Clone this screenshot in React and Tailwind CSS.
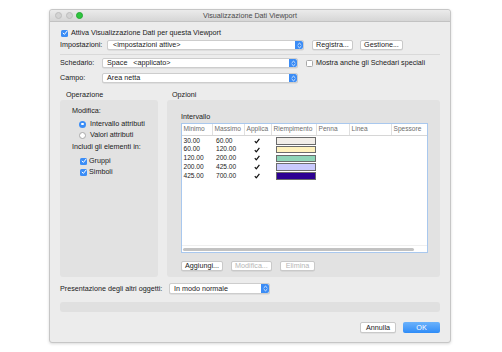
import React from "react";

function Check({ checked }) {
  return checked ? (
    <div className="w-[7px] h-[7px] rounded-[1.5px] bg-[#3b8df6] flex items-center justify-center shrink-0">
      <svg width="6" height="6" viewBox="0 0 6 6">
        <path d="M1.1 3.1 L2.4 4.4 L4.9 1.3" stroke="white" strokeWidth="1" fill="none" strokeLinecap="round" strokeLinejoin="round" />
      </svg>
    </div>
  ) : (
    <div className="w-[7px] h-[7px] rounded-[1.5px] bg-white border border-[#a8a8a8] shrink-0" />
  );
}

function Radio({ on }) {
  return on ? (
    <div className="w-[7px] h-[7px] rounded-full bg-[#3b8df6] flex items-center justify-center shrink-0">
      <div className="w-[2.5px] h-[2.5px] rounded-full bg-white" />
    </div>
  ) : (
    <div className="w-[7px] h-[7px] rounded-full bg-white border border-[#a8a8a8] shrink-0" />
  );
}

function Stepper() {
  return (
    <div className="w-[8px] h-full bg-[#3b8cf5] rounded-r-[2px] flex items-center justify-center shrink-0">
      <svg width="5" height="7" viewBox="0 0 5 7">
        <path d="M1 2.6 L2.5 1.2 L4 2.6 M1 4.4 L2.5 5.8 L4 4.4" stroke="white" strokeWidth="0.8" fill="none" strokeLinecap="round" strokeLinejoin="round" />
      </svg>
    </div>
  );
}

function Select({ w, text, pl }) {
  return (
    <div className={`${w} h-full bg-white rounded-[2px] border border-[#cdcdcd] shadow-[0_0.5px_0.5px_rgba(0,0,0,0.12)] flex items-stretch`}>
      <div className={`flex-1 flex items-center ${pl} whitespace-pre text-[#1a1a1a]`}>{text}</div>
      <Stepper />
    </div>
  );
}

function Btn({ w, children, disabled }) {
  return (
    <div
      className={`${w} h-full bg-white rounded-[2px] border border-[#c9c9c9] shadow-[0_0.5px_0.5px_rgba(0,0,0,0.1)] flex items-center justify-center ${
        disabled ? "text-[#b5b5b5] bg-[#f4f4f4]" : "text-[#1a1a1a]"
      }`}
    >
      {children}
    </div>
  );
}

const rows = [
  ["30.00", "60.00", "#f2eee9"],
  ["60.00", "120.00", "#fff2bd"],
  ["120.00", "200.00", "#8ed5b8"],
  ["200.00", "425.00", "#c9c9fd"],
  ["425.00", "700.00", "#2c0092"],
];

const heads = ["Minimo", "Massimo", "Applica", "Riempimento", "Penna", "Linea", "Spessore"];

export default function App() {
  return (
    <div className="w-[502px] h-[352px] bg-white pt-[9px] pl-[49px] font-['Liberation_Sans',Arial,sans-serif] text-[7.2px] leading-none text-[#1a1a1a]">
      <div className="w-[402px] h-[334px] bg-[#ececec] border border-[#c6c6c6] rounded-[3px] shadow-[0_1px_3px_rgba(0,0,0,0.15)] flex flex-col">
        {/* title bar */}
        <div className="h-[12px] bg-gradient-to-b from-[#ebebeb] to-[#d6d6d6] border-b border-[#c2c2c2] rounded-t-[3px] grid grid-cols-[1fr_auto_1fr] items-center">
          <div className="flex items-center gap-[3.5px] pl-[5px]">
            <div className="w-[7px] h-[7px] rounded-full bg-[#d3d3d3] border border-[#bdbdbd]" />
            <div className="w-[7px] h-[7px] rounded-full bg-[#d3d3d3] border border-[#bdbdbd]" />
            <div className="w-[7px] h-[7px] rounded-full bg-[#2fc63f] border border-[#25a833]" />
          </div>
          <div className="text-[#4a4a4a]">Visualizzazione Dati Viewport</div>
          <div />
        </div>

        <div className="px-[10px] flex flex-col">
          {/* Attiva */}
          <div className="mt-[7px] h-[8px] flex items-center">
            <div className="ml-[1px]"><Check checked /></div>
            <span className="ml-[3px]">Attiva Visualizzazione Dati per questa Viewport</span>
          </div>

          {/* Impostazioni */}
          <div className="mt-[3px] h-[10px] flex items-center">
            <div className="w-[47px]">Impostazioni:</div>
            <Select w="w-[197px]" text="<impostazioni attive>" pl="pl-[5px]" />
            <div className="ml-[8px] h-full"><Btn w="w-[41px]">Registra...</Btn></div>
            <div className="ml-[7px] h-full"><Btn w="w-[43px]">Gestione...</Btn></div>
          </div>

          <div className="mt-[4px] h-px bg-[#d9d9d9]" />

          {/* Schedario */}
          <div className="mt-[3px] h-[10px] flex items-center">
            <div className="w-[42px]">Schedario:</div>
            <Select w="w-[196px]" text="Space   <applicato>" pl="pl-[4px]" />
            <div className="ml-[8px]"><Check /></div>
            <span className="ml-[3px]">Mostra anche gli Schedari speciali</span>
          </div>

          {/* Campo */}
          <div className="mt-[5px] h-[10px] flex items-center">
            <div className="w-[42px]">Campo:</div>
            <Select w="w-[196px]" text="Area netta" pl="pl-[4px]" />
          </div>

          {/* group labels */}
          <div className="mt-[8px] h-[8px] flex items-center">
            <div className="w-[107px] pl-[6px]">Operazione</div>
            <div className="pl-[5px]">Opzioni</div>
          </div>

          {/* panels */}
          <div className="mt-[1px] h-[177px] flex gap-[9px]">
            <div className="w-[98px] bg-[#e2e2e2] rounded-[3px] flex flex-col pl-[12px]">
              <div className="mt-[7px] h-[8px] flex items-center">Modifica:</div>
              <div className="mt-[3.5px] h-[11px] flex items-center pl-[7px]">
                <Radio on />
                <span className="ml-[4px]">Intervallo attributi</span>
              </div>
              <div className="h-[11px] flex items-center pl-[7px]">
                <Radio />
                <span className="ml-[4px]">Valori attributi</span>
              </div>
              <div className="mt-[2.5px] h-[8px] flex items-center">Includi gli elementi in:</div>
              <div className="mt-[4.5px] h-[11px] flex items-center pl-[8px]">
                <Check checked />
                <span className="ml-[2px]">Gruppi</span>
              </div>
              <div className="h-[11px] flex items-center pl-[8px]">
                <Check checked />
                <span className="ml-[2px]">Simboli</span>
              </div>
            </div>

            <div className="flex-1 bg-[#e2e2e2] rounded-[3px] flex flex-col pl-[14px] pr-[12px]">
              <div className="mt-[13px] h-[8px] flex items-center">Intervallo</div>
              <div className="mt-[2px] h-[130px] bg-white border-[1.5px] border-[#a9c8ee] flex flex-col text-[6.6px]">
                <div className="h-[12px] border-b border-[#d6d6d6] grid grid-cols-[31px_32px_27px_45px_33px_42px_1fr] text-[#6e6e6e]">
                  {heads.map((h, i) => (
                    <div key={h} className={`flex items-center pl-[1.5px] ${i < 6 ? "border-r border-[#e0e0e0]" : ""}`}>
                      {h}
                    </div>
                  ))}
                </div>
                <div className="pt-[0.5px]">
                  {rows.map(([a, b, c]) => (
                    <div key={a} className="h-[8.75px] grid grid-cols-[31px_32px_27px_45px_33px_42px_1fr] items-center">
                      <div className="pl-[1.5px]">{a}</div>
                      <div className="pl-[3px]">{b}</div>
                      <div className="flex justify-center pr-[4px]">
                        <svg width="6" height="6" viewBox="0 0 6 6">
                          <path d="M0.8 3.2 L2.3 4.9 L5.4 0.8" stroke="#111" strokeWidth="1.2" fill="none" strokeLinejoin="round" />
                        </svg>
                      </div>
                      <div className="pl-[3.5px]">
                        <div className="w-[40px] h-[7.5px] border border-[#6b6b6b]" style={{ background: c }} />
                      </div>
                    </div>
                  ))}
                </div>
                <div className="flex-1" />
                <div className="h-[7px] border-t border-[#efefef] flex items-center px-[1px]">
                  <div className="w-[231px] h-[3px] rounded-full bg-[#c2c2c2]" />
                </div>
              </div>
              <div className="mt-[8px] h-[9.5px] flex">
                <Btn w="w-[42px]">Aggiungi...</Btn>
                <div className="ml-[8px] h-full"><Btn w="w-[41px]" disabled>Modifica...</Btn></div>
                <div className="ml-[8px] h-full"><Btn w="w-[35px]" disabled>Elimina</Btn></div>
              </div>
            </div>
          </div>

          {/* Presentazione */}
          <div className="mt-[6px] h-[11px] flex items-center">
            <div className="w-[109px]">Presentazione degli altri oggetti:</div>
            <Select w="w-[101px]" text="In modo normale" pl="pl-[4px]" />
          </div>

          <div className="mt-[8px] h-[10px] rounded-[3px] bg-[#e0e0e0]" />

          <div className="mt-[10px] h-[11px] flex justify-end">
            <Btn w="w-[36px]">Annulla</Btn>
            <div className="ml-[7px] w-[37px] h-full rounded-[2px] bg-gradient-to-b from-[#6bb2fb] to-[#2d8cf7] text-white flex items-center justify-center">
              OK
            </div>
          </div>
        </div>
      </div>
    </div>
  );
}
